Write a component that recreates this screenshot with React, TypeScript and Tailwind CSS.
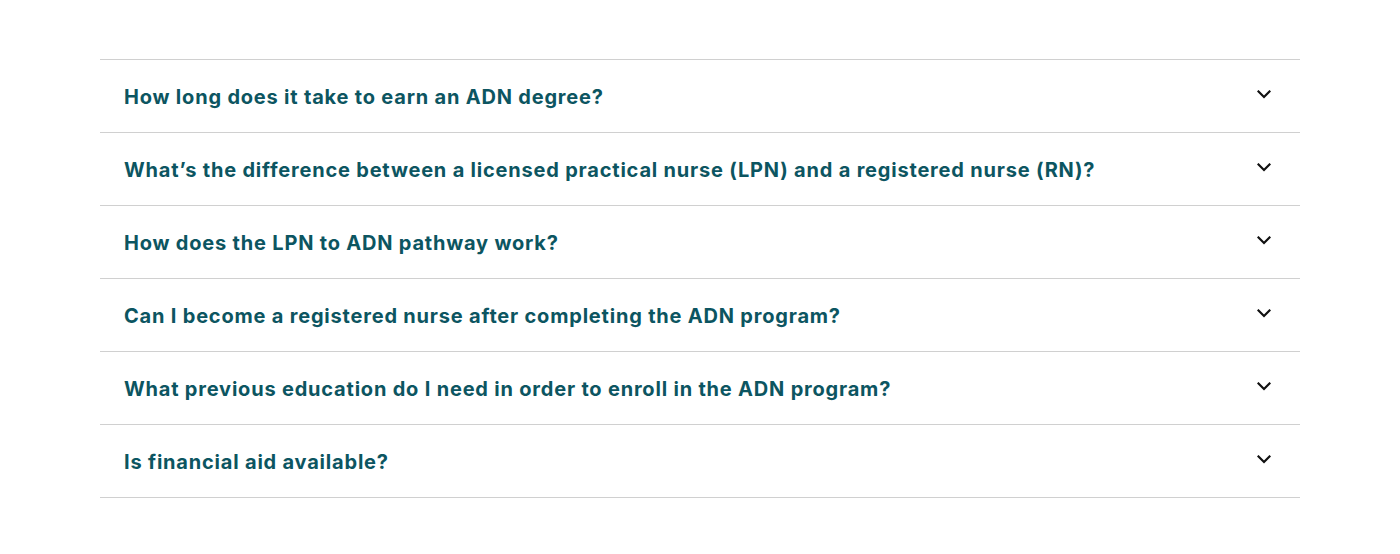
const questions = [
  "How long does it take to earn an ADN degree?",
  "What’s the difference between a licensed practical nurse (LPN) and a registered nurse (RN)?",
  "How does the LPN to ADN pathway work?",
  "Can I become a registered nurse after completing the ADN program?",
  "What previous education do I need in order to enroll in the ADN program?",
  "Is financial aid available?",
];

const Chevron = () => (
  <svg width="14" height="9" viewBox="0 0 14 9" fill="none" className="shrink-0">
    <path d="M1.5 1.5 7 7l5.5-5.5" stroke="#111" strokeWidth="2.2" strokeLinecap="square" />
  </svg>
);

export default function App() {
  return (
    <div className="min-h-[554px] bg-white pt-[59px] font-['Inter',sans-serif]">
      <div className="mx-auto w-[1200px] border-t border-[#d0d0d0]">
        {questions.map((q) => (
          <button
            key={q}
            className="flex h-[73px] w-full items-center justify-between border-b border-[#d0d0d0] pl-6 pr-[29px] text-left"
          >
            <span className="mt-[1px] text-[20px] font-bold tracking-[0.8px] text-[#0c5561]">{q}</span>
            <span className="-mt-1">
              <Chevron />
            </span>
          </button>
        ))}
      </div>
    </div>
  );
}
